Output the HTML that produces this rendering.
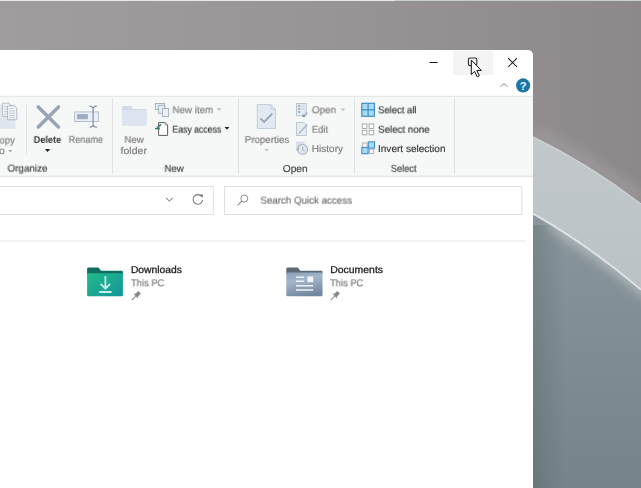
<!DOCTYPE html>
<html><head><meta charset="utf-8">
<style>
html,body{margin:0;padding:0;width:641px;height:488px;overflow:hidden;position:relative;font-family:"Liberation Sans",sans-serif;background:#928e8e;}
svg{position:absolute;left:0;top:0;}
.a{position:absolute;white-space:nowrap;line-height:1;font-family:"Liberation Sans",sans-serif;will-change:transform;-webkit-text-stroke:0.18px;text-rendering:geometricPrecision;transform-origin:0 0;}
</style></head><body>
<svg width="641" height="488" viewBox="0 0 641 488">
  <defs>
    <linearGradient id="bgg" gradientUnits="userSpaceOnUse" x1="0" y1="0" x2="641" y2="0">
      <stop offset="0" stop-color="#a19d9e"/>
      <stop offset="0.5" stop-color="#999596"/>
      <stop offset="1" stop-color="#8d898a"/>
    </linearGradient>
    <linearGradient id="inner" gradientUnits="userSpaceOnUse" x1="0" y1="213" x2="0" y2="488">
      <stop offset="0" stop-color="#8a969b"/>
      <stop offset="0.4" stop-color="#818e93"/>
      <stop offset="1" stop-color="#76848a"/>
    </linearGradient>
    <linearGradient id="rim" gradientUnits="userSpaceOnUse" x1="0" y1="137" x2="0" y2="290">
      <stop offset="0" stop-color="#c2c8ca"/>
      <stop offset="1" stop-color="#bbc2c5"/>
    </linearGradient>
    <linearGradient id="edgeshadow" gradientUnits="userSpaceOnUse" x1="533" y1="0" x2="565" y2="0">
      <stop offset="0" stop-color="#3c4a50" stop-opacity="0.22"/>
      <stop offset="1" stop-color="#3c4a50" stop-opacity="0"/>
    </linearGradient>
    <clipPath id="innerclip"><path d="M533 213.6 Q587 244 641 289.6 L641 488 L533 488 Z"/></clipPath>
    <filter id="blur6" x="-50%" y="-50%" width="200%" height="200%"><feGaussianBlur stdDeviation="5"/></filter>
    <filter id="soft1" x="-10%" y="-10%" width="120%" height="120%"><feGaussianBlur stdDeviation="0.8"/></filter>
    <filter id="soft" x="-10%" y="-10%" width="120%" height="120%"><feGaussianBlur stdDeviation="0.5"/></filter>
    <linearGradient id="dl" x1="0" y1="0" x2="1" y2="1">
      <stop offset="0" stop-color="#22bb88"/>
      <stop offset="1" stop-color="#13959c"/>
    </linearGradient>
    <linearGradient id="doc" x1="0.2" y1="0" x2="0.5" y2="1">
      <stop offset="0" stop-color="#8fa3bb"/>
      <stop offset="0.35" stop-color="#a2b5cb"/>
      <stop offset="1" stop-color="#72879f"/>
    </linearGradient>
  </defs>
  <!-- background -->
  <rect width="641" height="488" fill="url(#bgg)"/>
  <path d="M533 131 Q587 157 641 198" fill="none" stroke="#9d999a" stroke-width="10" filter="url(#blur6)"/>
  <path d="M533 137 Q587 163 641 204.1 L641 488 L533 488 Z" fill="url(#rim)"/>
  <path d="M533 137 Q587 163 641 204.1" fill="none" stroke="#cbd0d1" stroke-width="1.6" filter="url(#soft)"/>
  <path d="M533 213.6 Q587 244 641 289.6 L641 488 L533 488 Z" fill="url(#inner)"/>
  <g clip-path="url(#innerclip)">
    <path d="M550 222 Q598 250 665 305" fill="none" stroke="#aab3b7" stroke-width="16" filter="url(#blur6)"/>
    
  </g>
  <rect x="533" y="225" width="40" height="263" fill="url(#edgeshadow)" clip-path="url(#innerclip)"/>
  <path d="M533 213.6 Q587 244 641 289.6" fill="none" stroke="#e0e4e6" stroke-width="1.8" filter="url(#soft)"/>
  <rect x="0" y="0" width="395" height="1" fill="#e8e8e8"/>
  <rect x="395" y="0" width="246" height="1" fill="#c9d0cc"/>

  <!-- window -->
  <path d="M-10 50 H527.5 Q533 50 533 55.5 V500 H-10 Z" fill="#ffffff"/>

  <!-- title bar -->
  <rect x="453" y="50.75" width="40" height="24.3" fill="#f4f4f4"/>
  <line x1="429.5" y1="62.5" x2="437.7" y2="62.5" stroke="#1f1f1f" stroke-width="1"/>
  <rect x="468.4" y="58" width="8.4" height="7.6" rx="1.6" fill="none" stroke="#2a2a2a" stroke-width="1.1"/>
  <path d="M508.2 58.2 L517 67 M517 58.2 L508.2 67" stroke="#1f1f1f" stroke-width="1.05"/>
  <!-- cursor -->
  <path d="M471.3 60 L471.3 74.5 L474.6 71.3 L477.2 76.8 L479.3 75.8 L476.8 70.4 L481.3 70.4 Z" fill="#ffffff" stroke="#111" stroke-width="1" stroke-linejoin="miter"/>
  <!-- chevron & help -->
  <path d="M500.3 86.8 L504 83.5 L507.7 86.8" fill="none" stroke="#bababa" stroke-width="1.2"/>
  <circle cx="523.1" cy="85.4" r="7.1" fill="#1e76a8"/>
  <text x="523.2" y="89.6" font-family="Liberation Sans" font-weight="700" font-size="11" fill="#e6f6ff" text-anchor="middle">?</text>

  <!-- ribbon -->
  <rect x="-10" y="96" width="543" height="80.5" fill="#f6f7f7"/>
  <rect x="-10" y="95.8" width="543" height="1" fill="#e2e3e4"/>
  <rect x="-10" y="175.8" width="543" height="1" fill="#dcdddf"/>
  <rect x="26" y="105" width="1" height="48.5" fill="#e0e1e3"/>
  <rect x="112" y="98" width="1" height="76" fill="#e0e1e3"/>
  <rect x="238" y="98" width="1" height="76" fill="#e0e1e3"/>
  <rect x="354" y="98" width="1" height="76" fill="#e0e1e3"/>
  <rect x="454" y="98" width="1" height="76" fill="#e0e1e3"/>

  <!-- paste / copy -->
  <rect x="-2" y="104.5" width="17.4" height="24.3" fill="#e0e6ee"/>
  <path d="M2.6 103.2 H9.2 L11.2 105.2 V116.4 H2.6 Z" fill="#eef2f6" stroke="#b2bac4" stroke-width="0.9"/>
  <path d="M4.2 106.5 H7 M4.2 109 H7 M4.2 111.5 H7 M4.2 114 H7" stroke="#c3cad3" stroke-width="0.8"/>
  <path d="M7.6 105.8 H14.4 L16.8 108.2 V119.8 H7.6 Z" fill="#f3f6f9" stroke="#a9b2bd" stroke-width="0.9"/>
  <path d="M9.3 108.6 H13.5 M9.3 110.9 H15 M9.3 113.2 H15 M9.3 115.5 H15 M9.3 117.8 H15" stroke="#b9c2cc" stroke-width="0.9"/>
  <path d="M8.3 150 L12.3 150 L10.3 152.2 Z" fill="#a8a8a8"/>

  <!-- delete -->
  <path d="M38.3 106.9 L58.5 126.9 M58.5 106.9 L38.3 126.9" stroke="#98a3b3" stroke-width="3.5" stroke-linecap="round"/>
  <path d="M45 149 L50.2 149 L47.6 152 Z" fill="#1e1e1e"/>

  <!-- rename -->
  <rect x="74.6" y="111.9" width="23.8" height="9.6" fill="#e9eff6" stroke="#b3bfcd" stroke-width="1"/>
  <rect x="77.1" y="114.1" width="10.8" height="5.1" fill="#9cadc2"/>
  <path d="M89.6 106.1 Q92.9 106.3 93.1 108.6 Q93.3 106.3 96.9 106.1 M89.6 127.3 Q92.9 127.1 93.1 124.8 Q93.3 127.1 96.9 127.3 M93.1 108.2 V125.2" stroke="#8793a2" stroke-width="1.25" fill="none"/>

  <!-- new folder -->
  <path d="M122 107 Q122 106 123 106 H131 L133.5 109 H146.5 V125.5 H122 Z" fill="#d3dbe7"/>
  <rect x="122" y="110.2" width="24.5" height="15.3" fill="#dee5f0"/>

  <!-- new item -->
  <rect x="155.5" y="103.5" width="9" height="6" fill="#e9eef4" stroke="#a3adbb" stroke-width="0.9"/>
  <rect x="158.4" y="105.3" width="6.5" height="8" fill="#e9eef4" stroke="#a3adbb" stroke-width="0.9"/>
  <rect x="162.4" y="108.4" width="6.2" height="8.2" fill="#edf1f6" stroke="#a3adbb" stroke-width="0.9"/>
  <path d="M216.8 108.3 L221.6 108.3 L219.2 110.8 Z" fill="#bcbcbc"/>

  <!-- easy access -->
  <path d="M158.6 122.6 H165.2 L167.6 125 V135.4 H158.6 Z" fill="#ffffff" stroke="#5c5c5c" stroke-width="1" stroke-linejoin="miter"/>
  <path d="M165.2 122.6 V125 H167.6" fill="#dcdcdc" stroke="#8a8a8a" stroke-width="0.8"/>
  <path d="M155 128.6 H159.8" stroke="#3f6f6b" stroke-width="1.4"/>
  <path d="M157.2 128 L161 124.4" stroke="#4a7c77" stroke-width="1.8"/>
  <path d="M224.6 127 L229.4 127 L227 129.7 Z" fill="#1e1e1e"/>

  <!-- properties -->
  <path d="M257.3 104.6 H270.8 L275.5 109.3 V128.5 H257.3 Z" fill="#e2e9f2" stroke="#c3cedb" stroke-width="1"/>
  <path d="M270.8 104.6 V109.3 H275.5" fill="none" stroke="#c3cedb" stroke-width="1"/>
  <path d="M260.3 118.4 L264.2 122 L272.3 113.6" fill="none" stroke="#9aa7b7" stroke-width="1.9"/>
  <path d="M264.3 149 L269 149 L266.7 151.5 Z" fill="#c0c0c0"/>

  <!-- open/edit/history small icons -->
  <rect x="296.5" y="103.5" width="9.8" height="12.3" fill="#e4eaf1" stroke="#b7c2cf" stroke-width="0.9"/>
  <path d="M298.2 106 h2 M298.2 109 h2 M298.2 112 h2" stroke="#8e9aa8" stroke-width="1.4"/>
  <path d="M301.5 106 h3 M301.5 109 h3" stroke="#c2ccd7" stroke-width="0.9"/>
  <path d="M303 116.5 L307 112.5 M305 116.5 H303 V114.5" stroke="#7d8896" stroke-width="1" fill="none"/>
  <path d="M340.6 108.6 L345.4 108.6 L343 111 Z" fill="#c0c0c0"/>

  <path d="M296.5 122.5 H303.8 L306.3 125 V135.5 H296.5 Z" fill="#e6ecf2" stroke="#b7c2cf" stroke-width="0.9"/>
  <path d="M298.8 133.5 L307.3 124.5" stroke="#a9b5c3" stroke-width="1.3"/>

  <rect x="296" y="141.5" width="8.5" height="9.5" fill="#d7dfe8"/>
  <circle cx="302.6" cy="149.3" r="5" fill="#e2e8ef" stroke="#a8b4c2" stroke-width="1.1"/>
  <path d="M302.6 146.6 V149.5 L304.6 150.6" stroke="#a0adbb" stroke-width="1" fill="none"/>
  <path d="M296.3 149.3 L298.8 147.3 V151.3 Z" fill="#a8b4c2"/>

  <!-- select all -->
  <rect x="361.8" y="103.3" width="12.6" height="13" fill="#a9dcf4" stroke="#3d8ec3" stroke-width="1.15"/>
  <path d="M368.1 103.3 V116.3 M361.8 109.8 H374.4" stroke="#3d8ec3" stroke-width="1.15"/>
  <!-- select none -->
  <rect x="362.3" y="123.9" width="4.6" height="4.6" fill="#fbfbfb" stroke="#a6a6a6" stroke-width="0.9"/>
  <rect x="369.1" y="123.9" width="4.6" height="4.6" fill="#fbfbfb" stroke="#a6a6a6" stroke-width="0.9"/>
  <rect x="362.3" y="130.3" width="4.6" height="4.6" fill="#fbfbfb" stroke="#a6a6a6" stroke-width="0.9"/>
  <rect x="369.1" y="130.3" width="4.6" height="4.6" fill="#fbfbfb" stroke="#a6a6a6" stroke-width="0.9"/>
  <!-- invert -->
  <rect x="362.8" y="143" width="4.3" height="4.3" fill="#fbfbfb" stroke="#a6a6a6" stroke-width="0.9"/>
  <rect x="368.3" y="141.9" width="6.2" height="6.2" fill="#a9dcf4" stroke="#3d8ec3" stroke-width="1.1"/>
  <rect x="361.9" y="147.5" width="6.2" height="6.2" fill="#a9dcf4" stroke="#3d8ec3" stroke-width="1.1"/>
  <rect x="369.4" y="149.1" width="4.3" height="4.3" fill="#fbfbfb" stroke="#a6a6a6" stroke-width="0.9"/>

  <!-- address bar -->
  <rect x="-5" y="186.5" width="218.3" height="28" fill="#ffffff" stroke="#e0e0e0" stroke-width="1"/>
  <path d="M166 197.9 L169.4 201.1 L172.8 197.9" fill="none" stroke="#8a8a8a" stroke-width="1.05"/>
  <path d="M201.6 196.4 A4.8 4.8 0 1 0 202.6 200.2" fill="none" stroke="#747474" stroke-width="1.05"/>
  <path d="M199.6 194.6 L202.8 194.6 L202.8 197.8 Z" fill="#747474"/>
  <rect x="224.5" y="186.5" width="297.3" height="28" fill="#ffffff" stroke="#e0e0e0" stroke-width="1"/>
  <circle cx="244.3" cy="198.6" r="3.5" fill="none" stroke="#858585" stroke-width="0.95"/>
  <path d="M241.8 201.1 L237.6 205.3" stroke="#858585" stroke-width="1.05"/>
  <rect x="-10" y="240.5" width="536.5" height="1" fill="#e6e6e6"/>

  <!-- downloads folder -->
  <path d="M87.1 268.8 Q87.1 267.5 88.4 267.5 H98.5 L101 270.7 H121.6 Q122.9 270.7 122.9 272 V274 H87.1 Z" fill="#0f6e60"/>
  <rect x="87.1" y="273.2" width="35.8" height="23.1" rx="1.3" fill="url(#dl)"/>
  <path d="M105.4 276.2 V288.6 M100.6 283.9 L105.4 288.7 L110.2 283.9 M99.2 292 H111.6" fill="none" stroke="#c4f2ea" stroke-width="1.8"/>

  <!-- documents folder -->
  <path d="M286.3 268.9 Q286.3 267.6 287.6 267.6 H297.8 L300.3 270.8 H321.2 Q322.5 270.8 322.5 272.1 V274 H286.3 Z" fill="#5b6876"/>
  <rect x="286.3" y="272.6" width="36.2" height="23.7" rx="1.3" fill="url(#doc)"/>
  <path d="M296 277.2 H304.2 M296 281.3 H304.2 M296 285.8 H313.2 M296 290 H313.2" stroke="#eef3f8" stroke-width="1.5"/>
  <rect x="307.3" y="276.4" width="5.9" height="5.8" fill="#eef3f8"/>

  <!-- pins -->
  <g transform="translate(135.6,296.2) rotate(45)" fill="#8a8a8a">
    <path d="M-1.9 -5.6 H1.9 V-1.6 L3.3 -0.2 H-3.3 L-1.9 -1.6 Z"/>
    <rect x="-0.5" y="-0.5" width="1" height="6"/>
  </g>
  <g transform="translate(334.6,296.2) rotate(45)" fill="#8a8a8a">
    <path d="M-1.9 -5.6 H1.9 V-1.6 L3.3 -0.2 H-3.3 L-1.9 -1.6 Z"/>
    <rect x="-0.5" y="-0.5" width="1" height="6"/>
  </g>
</svg>
<div class="a" style="left:7px;top:164px;font-size:10px;color:#444444;transform:translate(0.500px,0.600px) scaleX(0.9858);">Organize</div>
<div class="a" style="left:164px;top:164px;font-size:10px;color:#444444;transform:translate(0.500px,0.800px) scaleX(0.9642);">New</div>
<div class="a" style="left:282px;top:164px;font-size:10px;color:#444444;transform:translate(0.800px,0.800px) scaleX(1.0176);">Open</div>
<div class="a" style="left:390px;top:164px;font-size:10px;color:#444444;transform:translate(0.800px,0.800px) scaleX(0.9246);">Select</div>
<div class="a" style="left:-1px;top:136px;font-size:10px;color:#7e7e7e;transform:translate(0.500px,0.500px) scaleX(0.9612);">opy</div>
<div class="a" style="left:-1px;top:146px;font-size:10px;color:#7e7e7e;transform:translate(0.000px,0.700px) scaleX(1.0427);">o</div>
<div class="a" style="left:33px;top:135px;font-size:10px;color:#333333;transform:translate(0.700px,0.900px) scaleX(0.9162);font-weight:700;-webkit-text-stroke:0;">Delete</div>
<div class="a" style="left:68px;top:135px;font-size:10px;color:#7e7e7e;transform:translate(0.700px,0.800px) scaleX(0.9071);">Rename</div>
<div class="a" style="left:124px;top:135px;font-size:10px;color:#7e7e7e;transform:translate(0.400px,0.900px) scaleX(0.9692);">New</div>
<div class="a" style="left:120px;top:146px;font-size:10px;color:#7e7e7e;transform:translate(0.600px,0.800px) scaleX(1.0513);">folder</div>
<div class="a" style="left:172px;top:106px;font-size:10px;color:#7e7e7e;transform:translate(0.500px,0.200px) scaleX(0.9763);">New item</div>
<div class="a" style="left:172px;top:125px;font-size:10px;color:#383838;transform:translate(0.400px,0.600px) scaleX(0.8692);">Easy access</div>
<div class="a" style="left:244px;top:136px;font-size:10px;color:#7e7e7e;transform:translate(0.700px,0.000px) scaleX(0.9785);">Properties</div>
<div class="a" style="left:311px;top:106px;font-size:10px;color:#7e7e7e;transform:translate(0.800px,0.200px) scaleX(0.9890);">Open</div>
<div class="a" style="left:311px;top:125px;font-size:10px;color:#7e7e7e;transform:translate(0.800px,0.700px) scaleX(0.9400);">Edit</div>
<div class="a" style="left:311px;top:144px;font-size:10px;color:#7e7e7e;transform:translate(0.800px,0.700px) scaleX(1.0024);">History</div>
<div class="a" style="left:378px;top:106px;font-size:10px;color:#383838;transform:translate(0.000px,0.300px) scaleX(0.9488);">Select all</div>
<div class="a" style="left:378px;top:125px;font-size:10px;color:#383838;transform:translate(0.000px,0.700px) scaleX(0.9768);">Select none</div>
<div class="a" style="left:378px;top:144px;font-size:10px;color:#383838;transform:translate(0.000px,0.800px) scaleX(1.0035);">Invert selection</div>
<div class="a" style="left:260px;top:196px;font-size:10px;color:#6f6f6f;transform:translate(0.400px,0.600px) scaleX(0.9751);">Search Quick access</div>
<div class="a" style="left:130px;top:265px;font-size:10px;color:#1f1f1f;-webkit-text-stroke:0.3px;transform:translate(0.900px,0.600px) scaleX(1.0306);">Downloads</div>
<div class="a" style="left:131px;top:279px;font-size:10px;color:#777777;-webkit-text-stroke:0.2px;transform:translate(0.000px,0.300px) scaleX(0.9364);">This PC</div>
<div class="a" style="left:330px;top:265px;font-size:10px;color:#1f1f1f;-webkit-text-stroke:0.3px;transform:translate(0.200px,0.600px) scaleX(1.0439);">Documents</div>
<div class="a" style="left:330px;top:279px;font-size:10px;color:#777777;-webkit-text-stroke:0.2px;transform:translate(0.000px,0.300px) scaleX(0.9364);">This PC</div>

</body></html>
